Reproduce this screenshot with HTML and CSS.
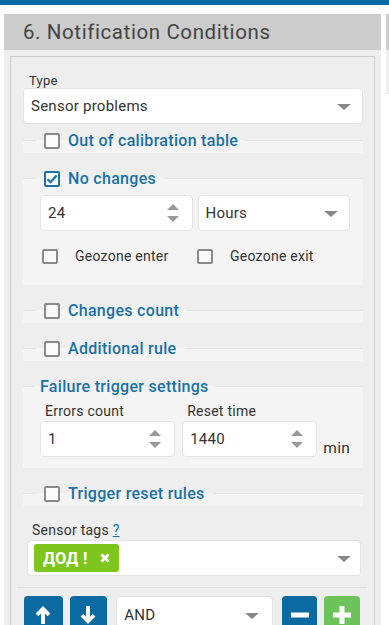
FILE: index.html
```html
<!DOCTYPE html>
<html lang="en">
<head>
    <meta charset="UTF-8">
    <meta name="viewport" content="width=device-width, initial-scale=1.0">
    <title>Notification Conditions</title>
    <link rel="stylesheet" href="styles.css">
</head>
<body>
    <div class="topbar"></div>
    <div class="page">
        <div class="panel">
            <div class="panel-head">6. Notification Conditions</div>
            <div class="panel-body">
                <div class="box">
                    <div class="field-label">Type</div>
                    <div class="select">Sensor problems<span class="caret"></span></div>

                    <fieldset class="group first">
                        <legend><span class="legend-row"><span class="check"></span>Out of calibration table</span></legend>
                    </fieldset>

                    <fieldset class="group">
                        <legend><span class="legend-row"><span class="check checked"><svg viewBox="0 0 12 12" width="12" height="12"><path d="M1.5 6.2 L4.6 9.2 L10.6 2.6" fill="none" stroke="#1971a6" stroke-width="2.2"/></svg></span>No changes</span></legend>
                        <div class="group-content nochanges">
                            <div class="two-cols">
                                <div class="input">24<span class="spinner"><i class="up"></i><i class="down"></i></span></div>
                                <div class="select">Hours<span class="caret"></span></div>
                            </div>
                            <div class="geo-row">
                                <label class="geo"><span class="box-check"></span>Geozone enter</label>
                                <label class="geo"><span class="box-check"></span>Geozone exit</label>
                            </div>
                        </div>
                    </fieldset>

                    <fieldset class="group">
                        <legend><span class="legend-row"><span class="check"></span>Changes count</span></legend>
                    </fieldset>

                    <fieldset class="group">
                        <legend><span class="legend-row"><span class="check"></span>Additional rule</span></legend>
                    </fieldset>

                    <fieldset class="group failure">
                        <legend class="plain">Failure trigger settings</legend>
                        <div class="group-content">
                            <div class="fail-row">
                                <div class="fail-col">
                                    <div class="small-label">Errors count</div>
                                    <div class="input">1<span class="spinner"><i class="up"></i><i class="down"></i></span></div>
                                </div>
                                <div class="fail-col">
                                    <div class="small-label">Reset time</div>
                                    <div class="input">1440<span class="spinner"><i class="up"></i><i class="down"></i></span></div>
                                </div>
                                <span class="unit">min</span>
                            </div>
                        </div>
                    </fieldset>

                    <fieldset class="group">
                        <legend><span class="legend-row"><span class="check"></span>Trigger reset rules</span></legend>
                    </fieldset>

                    <div class="tags-field">
                        <div class="field-label">Sensor tags <a class="hint">?</a></div>
                        <div class="tags-box">
                            <span class="tag">ДОД !<svg class="tag-x" viewBox="0 0 10 10" width="10" height="10"><path d="M1.5 1.5 L8.5 8.5 M8.5 1.5 L1.5 8.5" stroke="#fff" stroke-width="2.8"/></svg></span>
                            <span class="caret"></span>
                        </div>
                    </div>

                    <div class="actions">
                        <button class="btn blue"><svg viewBox="0 0 16 18" width="16" height="18"><path d="M8 18 L8 3 M2 8.8 L8 2.8 L14 8.8" fill="none" stroke="#fff" stroke-width="3.8"/></svg></button>
                        <button class="btn blue"><svg viewBox="0 0 16 18" width="16" height="18"><path d="M8 0 L8 15 M2 9.2 L8 15.2 L14 9.2" fill="none" stroke="#fff" stroke-width="3.8"/></svg></button>
                        <div class="select op">AND<span class="caret"></span></div>
                        <button class="btn blue"><svg viewBox="0 0 18 18" width="18" height="18"><path d="M0 9 L18 9" stroke="#fff" stroke-width="5"/></svg></button>
                        <button class="btn green"><svg viewBox="0 0 18 18" width="18" height="18"><path d="M0 9 L18 9 M9 0 L9 18" stroke="#fff" stroke-width="5"/></svg></button>
                    </div>
                </div>
            </div>
        </div>
        <div class="side">
            <div class="side-head"></div>
            <div class="side-body">
                <div class="side-card"></div>
            </div>
        </div>
    </div>
</body>
</html>
```

FILE: styles.css
```css
body {
    margin: 0;
    font-family: Roboto, "Liberation Sans", sans-serif;
    letter-spacing: 0.25px;
    background: #fff;
    color: #333;
}
.topbar {
    height: 5px;
    background: #0b6aa2;
}
.page {
    display: flex;
    gap: 5px;
    padding: 9px 0 0 4px;
    overflow: hidden;
}
.panel {
    width: 377px;
    flex: none;
    background: #eee;
}
.panel-head {
    height: 36px;
    line-height: 36px;
    padding-left: 19px;
    background: #ccc;
    font-size: 20.5px;
    letter-spacing: 0.6px;
    color: #444;
}
.panel-body {
    padding: 6px 6px 0 6px;
}
.box {
    border: 1px solid #ccc;
    border-bottom: none;
    padding: 17px 11px 0 12px;
    height: 620px;
}
.field-label {
    font-size: 13px;
    line-height: 14px;
    color: #333;
    padding-left: 6px;
}
.select, .input {
    position: relative;
    height: 36px;
    line-height: 34px;
    box-sizing: border-box;
    background: #fff;
    border: 1px solid #e4e4e4;
    border-radius: 4px;
    padding-left: 7px;
    font-size: 15px;
    color: #333;
}
.caret {
    position: absolute;
    right: 11px;
    top: 15px;
    width: 0;
    height: 0;
    border-left: 7px solid transparent;
    border-right: 7px solid transparent;
    border-top: 6px solid #888;
}
.spinner {
    position: absolute;
    right: 13px;
    top: 8px;
    width: 12px;
    height: 18px;
}
.spinner i {
    position: absolute;
    left: 0;
    width: 0;
    height: 0;
    border-left: 6px solid transparent;
    border-right: 6px solid transparent;
}
.spinner .up {
    top: 0;
    border-bottom: 6px solid #999;
}
.spinner .down {
    bottom: 0;
    border-top: 6px solid #999;
}

/* collapsible groups */
.group {
    margin: 17px 0 0 0;
    padding: 0 13px 4px 17px;
    min-width: 0;
    border: none;
    border-top: 1px solid #e3e3e3;
    background: #f4f4f4;
}
.group.first {
    margin-top: 8px;
}
.group legend {
    padding: 0 8px 0 8px;
    margin-left: -4px;
    font-size: 16px;
    line-height: 17px;
    font-weight: 500;
    letter-spacing: 0.3px;
    color: #1971a6;
}
.group legend.plain {
    padding: 0 6px;
    margin-left: -6px;
}
.legend-row {
    display: flex;
    align-items: center;
    gap: 8px;
}
.check {
    width: 16px;
    height: 16px;
    box-sizing: border-box;
    border: 2px solid #8a8a8a;
    border-radius: 2px;
    background: #fafafa;
    display: flex;
    align-items: center;
    justify-content: center;
}
.check.checked {
    border-color: #1971a6;
}
.nochanges {
    padding: 8px 0 15px 0;
}
.two-cols {
    display: grid;
    grid-template-columns: 1fr 1fr;
    gap: 5px;
}
.geo-row {
    display: flex;
    height: 20px;
    margin-top: 15px;
}
.geo {
    display: flex;
    align-items: center;
    width: 160px;
    font-size: 14px;
    color: #333;
}
.box-check {
    width: 16px;
    height: 15px;
    box-sizing: border-box;
    border: 2px solid #8a8a8a;
    border-radius: 2px;
    background: #fafafa;
    margin: 0 17px 0 2px;
}
.failure {
    padding-bottom: 11px;
}
.failure .group-content {
    padding-top: 9px;
}
.fail-row {
    display: flex;
    align-items: flex-end;
    gap: 7px;
}
.fail-col {
    width: 137px;
}
.small-label {
    font-size: 14px;
    line-height: 15px;
    padding-left: 5px;
    margin-bottom: 2px;
}
.unit {
    font-size: 15.5px;
    color: #333;
    line-height: 18px;
    margin-left: -1px;
}

/* tags */
.tags-field {
    margin: 17px 2px 0 4px;
}
.tags-field .field-label {
    font-size: 14px;
    line-height: 15px;
    padding-left: 5px;
    margin-bottom: 2px;
}
.hint {
    color: #1971a6;
    text-decoration: underline;
}
.tags-box {
    position: relative;
    height: 36px;
    box-sizing: border-box;
    background: #fff;
    border: 1px solid #e4e4e4;
    border-radius: 4px;
    padding: 3px 6px;
}
.tags-box .caret {
    right: 9px;
    top: 15px;
}
.tag {
    display: inline-flex;
    align-items: center;
    height: 28px;
    padding: 0 9px;
    border-radius: 3px;
    background: #7ec61e;
    color: #fff;
    font-size: 16px;
    font-weight: 700;
    letter-spacing: 0.4px;
}
.tag-x {
    margin-left: 12px;
}

/* actions */
.actions {
    display: flex;
    margin: 11px -4px 0 -6px;
    padding: 8px 7px 0 7px;
    border-top: 1px solid #ddd;
}
.btn {
    height: 38px;
    border: none;
    border-radius: 4px;
    padding: 0;
    display: flex;
    align-items: center;
    justify-content: center;
}
.btn.blue {
    background: #0b6aa2;
}
.btn.green {
    background: #6cc35a;
}
.btn:nth-child(1) { width: 39px; margin-right: 7px; }
.btn:nth-child(2) { width: 38px; margin-right: 9px; }
.select.op {
    width: 158px;
    height: 38px;
    line-height: 36px;
    margin-right: 9px;
}
.select.op .caret {
    right: 13px;
    top: 16px;
}
.btn:nth-child(4) { width: 36px; margin-right: 7px; }
.btn:nth-child(5) { width: 36px; }

/* neighbour panel */
.side {
    width: 200px;
    flex: none;
    background: #eee;
}
.side-head {
    height: 36px;
    background: #ccc;
}
.side-body {
    padding-top: 43px;
}
.side-card {
    height: 600px;
    background: #fff;
    border-top: 1px solid #e6e6e6;
}
```
